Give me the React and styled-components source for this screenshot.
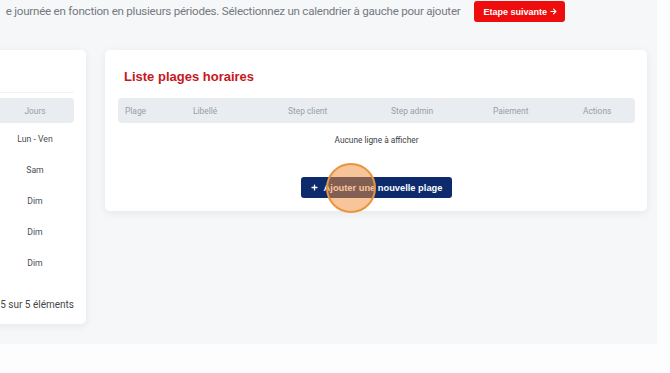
import React from "react"
import styled, { createGlobalStyle } from "styled-components"
import { FaArrowRight, FaPlus } from "react-icons/fa"

const GlobalStyle = createGlobalStyle`
  html, body {
    margin: 0;
    padding: 0;
    background: #fdfdfd;
    overflow: hidden;
  }
  body {
    font-family: Roboto, "Liberation Sans", Arial, sans-serif;
  }
`

const Page = styled.div`
  width: 657px;
  height: 344px;
  background: #f6f7f8;
  overflow: hidden;
`

const TopBar = styled.div`
  height: 23px;
  display: flex;
  align-items: flex-start;
  justify-content: flex-end;
  gap: 14px;
  padding: 1px 92px 0 0;
`

const Intro = styled.p`
  flex-shrink: 0;
  margin: 3px 0 0;
  white-space: nowrap;
  font-size: 11.6px;
  letter-spacing: -0.25px;
  color: #75797f;
`

const RedButton = styled.button`
  flex-shrink: 0;
  white-space: nowrap;
  height: 21px;
  padding: 0 8px 0 9px;
  display: flex;
  align-items: center;
  gap: 3px;
  border: none;
  border-radius: 3px;
  background: #ee0c0c;
  color: #fff;
  font-family: "Liberation Sans", Arial, sans-serif;
  font-weight: 700;
  font-size: 9px;
  svg {
    width: 7px;
    height: 7px;
  }
`

const Cards = styled.div`
  display: flex;
  align-items: flex-start;
  gap: 19px;
  margin: 26px 0 0 -120px;
`

const Card = styled.div`
  flex-shrink: 0;
  background: #fff;
  border-radius: 5px;
  box-shadow: 0 2px 8px rgba(0, 0, 0, 0.07);
  width: ${p => p.width}px;
  padding: ${p => p.pad};
  box-sizing: border-box;
`

const Toolbar = styled.div`
  height: 42px;
  border-bottom: 1px solid #f1f2f4;
  margin-bottom: 5px;
`

const Title = styled.h2`
  margin: 0;
  height: 48px;
  box-sizing: border-box;
  padding: 4px 0 0 6px;
  display: flex;
  align-items: center;
  font-family: "Liberation Sans", Arial, sans-serif;
  font-size: 13px;
  font-weight: 700;
  color: #c8161d;
`

const HeadRow = styled.div`
  display: grid;
  grid-template-columns: ${p => p.cols};
  height: 25px;
  align-items: center;
  background: #e9ecf0;
  border-radius: 4px;
  font-size: 8.4px;
  color: #9a9ea6;
`

const Row = styled.div`
  display: grid;
  grid-template-columns: ${p => p.cols};
  height: 31px;
  align-items: center;
  font-size: 8.7px;
  color: #4a4d52;
`

const Cell = styled.span`
  text-align: ${p => (p.center ? "center" : "left")};
  padding-left: ${p => (p.center ? "0" : "7px")};
`

const Footer = styled.div`
  padding: 20px 0 13px;
  line-height: 13px;
  text-align: right;
  font-size: 10px;
  color: #44474c;
`

const Empty = styled.div`
  height: 33px;
  display: flex;
  align-items: center;
  justify-content: center;
  font-size: 8.3px;
  color: #3d4045;
`

const Actions = styled.div`
  display: flex;
  justify-content: center;
  padding: 21px 0 13px;
`

const NavyButton = styled.button`
  position: relative;
  height: 21px;
  padding: 0 10px;
  display: flex;
  align-items: center;
  gap: 6px;
  border: none;
  border-radius: 3px;
  background: #0c2a6c;
  color: #fff;
  font-family: "Liberation Sans", Arial, sans-serif;
  font-weight: 700;
  font-size: 9.3px;
  svg {
    width: 7px;
    height: 7px;
  }
`

const Pointer = styled.span`
  position: absolute;
  left: 25px;
  top: -14px;
  width: 46px;
  height: 46px;
  border-radius: 50%;
  border: 2px solid #e8953e;
  background: rgba(242, 142, 60, 0.52);
  pointer-events: none;
`

const dayCols = "104px 1fr"
const dayRows = ["Lun - Ven", "Sam", "Dim", "Dim", "Dim"]

const plageCols = "68px 95px 103px 102px 90px 1fr"
const plageHeads = ["Plage", "Libellé", "Step client", "Step admin", "Paiement", "Actions"]

export default function App() {
  return (
    <>
      <GlobalStyle />
      <Page>
        <TopBar>
          <Intro>
            e journée en fonction en plusieurs périodes. Sélectionnez un calendrier à gauche pour ajouter
          </Intro>
          <RedButton>
            Etape suivante <FaArrowRight />
          </RedButton>
        </TopBar>

        <Cards>
          <Card width={206} pad="0 12px 0 12px">
            <Toolbar />
            <HeadRow cols={dayCols}>
              <Cell>Calendrier</Cell>
              <Cell center>Jours</Cell>
            </HeadRow>
            {dayRows.map((d, i) => (
              <Row key={i} cols={dayCols}>
                <Cell />
                <Cell center>{d}</Cell>
              </Row>
            ))}
            <Footer>Affichage de 1 à 5 sur 5 éléments</Footer>
          </Card>

          <Card width={542} pad="0 12px 0 13px">
            <Title>Liste plages horaires</Title>
            <HeadRow cols={plageCols}>
              {plageHeads.map(h => (
                <Cell key={h}>{h}</Cell>
              ))}
            </HeadRow>
            <Empty>Aucune ligne à afficher</Empty>
            <Actions>
              <NavyButton>
                <FaPlus /> Ajouter une nouvelle plage
                <Pointer />
              </NavyButton>
            </Actions>
          </Card>
        </Cards>
      </Page>
    </>
  )
}
